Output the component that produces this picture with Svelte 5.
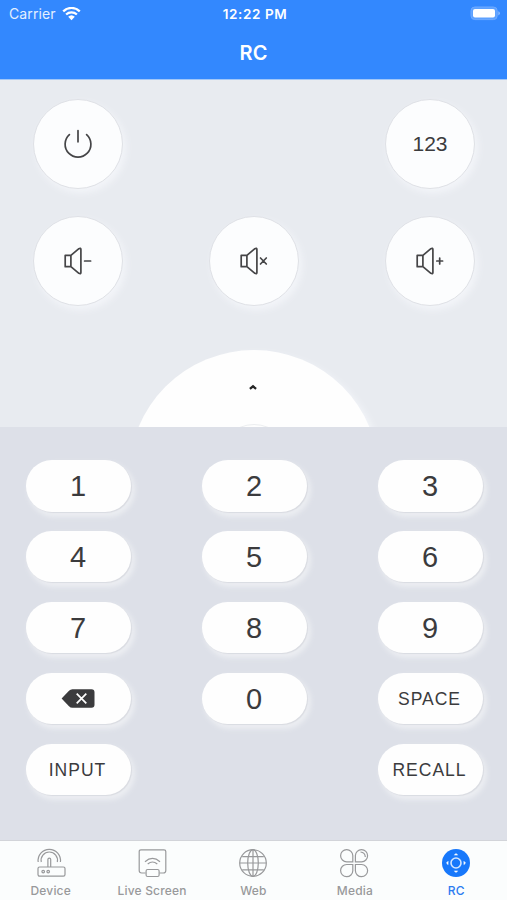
<script>
    let activeTab = $state('RC');

    const keys = ['1', '2', '3', '4', '5', '6', '7', '8', '9', 'delete', '0', 'SPACE', 'INPUT', '', 'RECALL'];
    const tabs = ['Device', 'Live Screen', 'Web', 'Media', 'RC'];
</script>

{#snippet speaker(mark)}
    <svg class="icon" width="28" height="28" viewBox="0 0 28 28">
        <path d="M1.2 8.3h5.700v11.400H1.200zM6.900 8.300l8-6.600q2-1.100 2 .9v22.800q0 2-2 .9l-8-6.600" />
        <path d={mark} />
    </svg>
{/snippet}

<div class="phone">
    <header>
        <div class="status">
            <div class="carrier">
                <span>Carrier</span>
                <svg width="19" height="14" viewBox="0 0 19 14">
                    <path d="M1.2 4.3a12 12 0 0 1 16.6 0M4.1 7.5a8 8 0 0 1 10.8 0" fill="none" stroke="#fff" stroke-width="2.3" />
                    <path d="M6.2 9.8a4.8 4.8 0 0 1 6.6 0L9.5 13.2z" fill="#fff" />
                </svg>
            </div>
            <span class="time">12:22 PM</span>
            <div class="battery">
                <svg width="31" height="15" viewBox="0 0 31 15">
                    <rect x="1" y="1" width="26.2" height="12.6" rx="3.8" fill="#5da1ff" stroke="#70abff" />
                    <rect x="3" y="3" width="22" height="8.6" rx="2" fill="#fff" />
                    <path d="M28.3 5.2v4.2q1.6-.6 1.6-2.1t-1.6-2.1" fill="#8dbcff" />
                </svg>
            </div>
        </div>
        <h1>RC</h1>
    </header>

    <section class="remote">
        <div class="row">
            <button class="round" aria-label="Power">
                <svg class="icon" width="30" height="30" viewBox="0 0 30 30">
                    <path d="M6.4 5.6a12.900 12.900 0 1 0 17.200 0M15 1.500v11.300" />
                </svg>
            </button>
            <button class="round">123</button>
        </div>
        <div class="row">
            <button class="round" aria-label="Volume down">{@render speaker('M20.6 14h6')}</button>
            <button class="round" aria-label="Mute">{@render speaker('M20.5 11l5.8 6M26.3 11l-5.8 6')}</button>
            <button class="round" aria-label="Volume up">{@render speaker('M20.8 14h5.8M23.7 11.1v5.8')}</button>
        </div>
        <div class="dpad">
            <svg class="up" width="10" height="8" viewBox="0 0 10 8">
                <path d="M1.9 5.8L5 3.3l3.1 2.5" fill="none" stroke="#252525" stroke-width="2.3" />
            </svg>
            <div class="ok"></div>
        </div>
    </section>

    <section class="keypad">
        {#each keys as key}
            {#if key === ''}
                <span></span>
            {:else if key === 'delete'}
                <button class="key" aria-label="Delete">
                    <svg class="delete" width="34" height="19" viewBox="0 0 34 19">
                        <path d="M.6 9.5L8 1.8Q9.4 .3 11.4 .3H30.5q3 0 3 3v12.4q0 3-3 3H11.4q-2 0-3.4-1.5z" fill="#3b3b3d" />
                        <path d="M15.7 4.6l9.6 9.8m0-9.8l-9.6 9.8" stroke="#fff" stroke-width="1.7" />
                    </svg>
                </button>
            {:else}
                <button class="key" class:word={key.length > 1}>{key}</button>
            {/if}
        {/each}
    </section>

    <nav>
        {#each tabs as tab}
            <button class="tab" class:active={tab === activeTab} onclick={() => (activeTab = tab)}>
                <svg class="tab-icon" width="30" height="30" viewBox="0 0 30 30">
                    {#if tab === 'Device'}
                        <rect x="2" y="19" width="27" height="9.2" rx="1.6" />
                        <path d="M11.9 19v-7.5q0-1.3 1.4-1.3t1.4 1.3V19M5.3 14a8.2 8.2 0 1 1 16 0M2.2 14a11.2 11.2 0 1 1 22.2 0" />
                        <circle cx="7.2" cy="23.6" r="1.3" />
                        <circle cx="12.2" cy="23.6" r="1.3" />
                    {:else if tab === 'Live Screen'}
                        <path d="M8.6 25H4.7q-2.5 0-2.5-2.5V3.6q0-1.8 1.8-1.8h23q1.8 0 1.8 1.8v18.9q0 2.5-2.5 2.5h-3.9" />
                        <rect x="9.1" y="21.5" width="13" height="7" rx="1.5" />
                        <path d="M8 13.7q7.5-6.6 15 0M10.7 16q4.8-4 9.6 0" />
                    {:else if tab === 'Web'}
                        <circle cx="15" cy="15" r="13.3" />
                        <ellipse cx="15" cy="15" rx="5.3" ry="13.3" />
                        <path d="M15 1.7v26.6M1.7 15h26.6M4.2 8.7h21.6M4.2 21.8h21.6" />
                    {:else if tab === 'Media'}
                        <path d="M12.8 13.8H6.7a6.1 6.1 0 1 1 6.1-6.2zM15.4 13.8V7.6a6.1 6.1 0 1 1 6.2 6.2zM12.8 16.5v6.2a6.1 6.1 0 1 1-6.1-6.2zM15.4 16.5h6.2a6.1 6.1 0 1 1-6.2 6.2z" />
                        <path d="M20.5 4q4.5.3 4.8 5" />
                    {:else}
                        <circle class="disc" cx="15" cy="15" r="14" />
                        <circle class="ring" cx="15" cy="15" r="5" />
                        <path class="arrows" d="M13.3 7.1h3.4l-1.7-1.7zM13.3 22.9h3.4l-1.7 1.7zM7.1 13.3v3.4l-1.7-1.7zM22.9 13.3v3.4l1.7-1.7z" />
                    {/if}
                </svg>
                <span>{tab}</span>
            </button>
        {/each}
    </nav>
</div>

<style>
    :global(body) {
        margin: 0;
    }
    .phone {
        display: flex;
        flex-direction: column;
        width: 507px;
        height: 900px;
        overflow: hidden;
        font-family: Inter, "Liberation Sans", sans-serif;
    }
    button {
        padding: 0;
        border: none;
        font-family: "Liberation Sans", Arial, sans-serif;
        color: #3b3b3d;
        cursor: pointer;
    }
    svg {
        display: block;
    }
    header {
        box-sizing: border-box;
        height: 80px;
        background: #3388fe;
        border-bottom: 1px solid #a2c7f8;
        color: #fff;
    }
    .status {
        display: grid;
        grid-template-columns: 1fr auto 1fr;
        align-items: center;
        height: 27px;
        padding: 0 6px 0 9px;
        font-size: 14px;
    }
    .carrier {
        display: flex;
        align-items: center;
        gap: 6px;
        color: #e4efff;
        letter-spacing: 0.1px;
    }
    .time {
        font-size: 13.5px;
        font-weight: 600;
        letter-spacing: 0.6px;
    }
    .battery {
        justify-self: end;
    }
    h1 {
        margin: 0;
        font-size: 20px;
        font-weight: 600;
        line-height: 52px;
        text-align: center;
    }
    .remote {
        display: flex;
        flex-direction: column;
        gap: 28px;
        box-sizing: border-box;
        height: 347px;
        padding-top: 19px;
        overflow: hidden;
        background: #e8ebf0;
    }
    .row {
        display: flex;
        justify-content: space-between;
        padding: 0 32px 0 33px;
    }
    .round {
        display: grid;
        place-items: center;
        box-sizing: border-box;
        width: 90px;
        height: 90px;
        margin-bottom: -1px;
        border: 1px solid #dfe1e6;
        border-radius: 50%;
        background: #fcfdfe;
        box-shadow: 3px 4px 7px #f3f5f9;
        font-size: 21px;
    }
    .icon {
        fill: none;
        stroke: #454547;
        stroke-width: 1.7;
        stroke-linecap: round;
        stroke-linejoin: round;
    }
    .dpad {
        display: flex;
        flex: none;
        flex-direction: column;
        align-items: center;
        align-self: center;
        box-sizing: border-box;
        width: 250px;
        height: 250px;
        margin: 16.5px 0 0 1px;
        padding-top: 33px;
        border-radius: 50%;
        background: #fefefe;
        box-shadow: 4px 4px 7px #f4f6fa;
    }
    .up {
        margin-right: 2px;
    }
    .ok {
        width: 70px;
        height: 70px;
        margin-top: 33.5px;
        border: 1px solid #eceef0;
        border-radius: 50%;
    }
    .keypad {
        display: grid;
        grid-template-columns: repeat(3, 105px);
        grid-auto-rows: 51.5px;
        align-content: start;
        justify-content: space-between;
        row-gap: 19.45px;
        box-sizing: border-box;
        height: 413px;
        padding: 33px 24.5px 0 25.5px;
        background: #dde0e8;
    }
    .key {
        display: grid;
        place-items: center;
        padding-top: 2px;
        border-radius: 26px;
        background: #fefefe;
        box-shadow: 1px 1px 1px #d9dbe1, 3px 4px 5px 1px #eceef2;
        font-size: 29px;
    }
    .delete {
        margin-bottom: 2px;
    }
    .word {
        padding: 2px 1px 0 0;
        font-size: 17.5px;
        letter-spacing: 1px;
    }
    nav {
        display: grid;
        grid-template-columns: repeat(5, 1fr);
        box-sizing: border-box;
        height: 60px;
        border-top: 1px solid #d2d4d9;
        background: #fbfdfd;
    }
    .tab {
        display: flex;
        flex-direction: column;
        align-items: center;
        gap: 5px;
        padding-top: 7px;
        background: none;
        font: 500 12px/16px Inter, sans-serif;
        letter-spacing: 0.2px;
        color: #98999b;
    }
    .tab-icon {
        fill: none;
        stroke: #98999b;
        stroke-width: 1.2;
    }
    .active {
        color: #2b7bf0;
    }
    .disc {
        fill: #1778fb;
        stroke: none;
    }
    .ring {
        stroke: #d3e6ff;
        stroke-width: 1.6;
    }
    .arrows {
        fill: #fff;
        stroke: #fff;
        stroke-width: 0.5;
    }
</style>
